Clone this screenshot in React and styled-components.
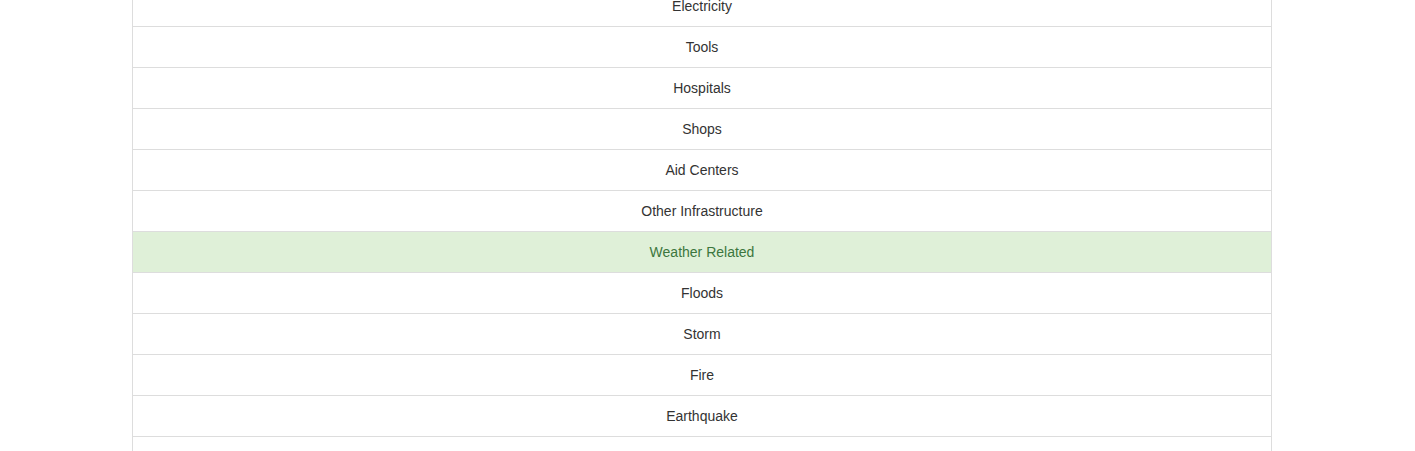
import React from 'react';
import styled, { createGlobalStyle } from 'styled-components';

const GlobalStyle = createGlobalStyle`
  html, body {
    margin: 0;
    padding: 0;
    background: #fff;
  }
  body {
    font-family: "Liberation Sans", Arial, sans-serif;
    font-size: 14px;
    line-height: 1.42857143;
    color: #333;
    overflow: hidden;
  }
`;

// list is scrolled a little, so the first row sits partly above the top edge
const Page = styled.div`
  width: 1140px;
  margin-left: 132px;
  margin-top: -15px;
`;

const ListGroup = styled.ul`
  list-style: none;
  margin: 0;
  padding: 0;
`;

const ListItem = styled.li`
  position: relative;
  display: block;
  min-height: 20px;
  padding: 10px 15px;
  margin-bottom: -1px;
  border: 1px solid #ddd;
  text-align: center;
  background: ${(p) => (p.$success ? '#dff0d8' : '#fff')};
  color: ${(p) => (p.$success ? '#3c763d' : '#333')};
`;

const items = [
  { label: 'Electricity' },
  { label: 'Tools' },
  { label: 'Hospitals' },
  { label: 'Shops' },
  { label: 'Aid Centers' },
  { label: 'Other Infrastructure' },
  { label: 'Weather Related', success: true },
  { label: 'Floods' },
  { label: 'Storm' },
  { label: 'Fire' },
  { label: 'Earthquake' },
  { label: '' },
];

function App() {
  return (
    <>
      <GlobalStyle />
      <Page>
        <ListGroup>
          {items.map((item, i) => (
            <ListItem key={i} $success={item.success}>
              {item.label}
            </ListItem>
          ))}
        </ListGroup>
      </Page>
    </>
  );
}

export default App;
